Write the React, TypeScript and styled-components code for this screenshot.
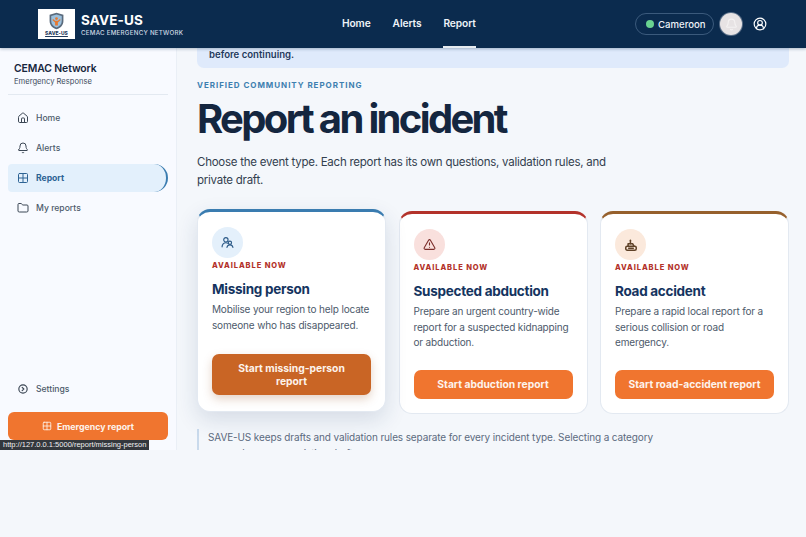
import React from 'react';
import styled, { createGlobalStyle } from 'styled-components';
import { Home, Bell, Folder, CircleUserRound, TriangleAlert, Grid2x2, CircleChevronRight } from 'lucide-react';

const GlobalStyle = createGlobalStyle`
	html, body {
		margin: 0;
		padding: 0;
		background: #f4f7fb;
		font-family: Inter, "Liberation Sans", sans-serif;
	}
	* {
		box-sizing: border-box;
	}
`;

const navLinks = ['Home', 'Alerts', 'Report'];

const sideItems = [
	{ label: 'Home', icon: <Home size={12} /> },
	{ label: 'Alerts', icon: <Bell size={12} /> },
	{ label: 'Report', icon: <Grid2x2 size={12} />, active: true },
	{ label: 'My reports', icon: <Folder size={12} /> },
];

const PeopleIcon = () => (
	<svg width="13" height="13" viewBox="0 0 24 24" fill="none" stroke="#2d5b88" strokeWidth="2.1" strokeLinecap="round" strokeLinejoin="round">
		<circle cx="9" cy="7" r="4" />
		<path d="M2 20c0-4.5 3-7.5 7-7.5 1.6 0 3 .4 4 1.2" />
		<circle cx="16.5" cy="12.5" r="3" />
		<path d="M11 21c.5-2.6 2.7-4.5 5.5-4.5s5 1.9 5.5 4.5" />
	</svg>
);

const RoadIcon = () => (
	<svg width="14" height="14" viewBox="0 0 24 24" fill="none" stroke="#5f4228" strokeWidth="2.6" strokeLinejoin="round" strokeLinecap="round">
		<rect x="3" y="14" width="18" height="7" rx="2.5" />
		<path d="M7 14v-4h8l2 4" />
		<path d="M11 10V4" />
		<path d="M8 17.5h8" />
	</svg>
);

const cards = [
	{
		title: 'Missing person',
		text: 'Mobilise your region to help locate someone who has disappeared.',
		button: 'Start missing-person report',
		accent: '#3a7cb0',
		tint: '#e4f0fb',
		icon: <PeopleIcon />,
		hovered: true,
	},
	{
		title: 'Suspected abduction',
		text: 'Prepare an urgent country-wide report for a suspected kidnapping or abduction.',
		button: 'Start abduction report',
		accent: '#b3322a',
		tint: '#f9e0dd',
		icon: <TriangleAlert size={13} color="#7c2d2a" />,
	},
	{
		title: 'Road accident',
		text: 'Prepare a rapid local report for a serious collision or road emergency.',
		button: 'Start road-accident report',
		accent: '#96602c',
		tint: '#fbe9dc',
		icon: <RoadIcon />,
	},
];

const App: React.FC = () => {
	return (
		<>
			<GlobalStyle />
			<Shell>
				<Header>
					<Brand>
						<LogoBox>
							<svg width="17" height="18" viewBox="0 0 24 26">
								<path d="M12 1l10 3v9c0 6-4 10-10 12C6 23 2 19 2 13V4z" fill="#5a6a7c" />
								<path d="M12 3.5l7.6 2.2V13c0 4.5-3 7.600-7.600 9.500C7.400 20.600 4.400 17.500 4.400 13V5.700z" fill="#9cc0dc" />
								<path d="M7 10l3 2.500h4l3-2.500 1 1.500-4 3.500v4.500h-4V15l-4-3.500z" fill="#e8792f" />
								<circle cx="12" cy="9.500" r="2" fill="#e8792f" />
							</svg>
							<LogoText>SAVE-US</LogoText>
						</LogoBox>
						<BrandText>
							<BrandName>SAVE-US</BrandName>
							<BrandSub>CEMAC EMERGENCY NETWORK</BrandSub>
						</BrandText>
					</Brand>
					<TopNav>
						{navLinks.map((link) => (
							<TopLink key={link} $active={link === 'Report'}>
								{link}
							</TopLink>
						))}
					</TopNav>
					<HeaderRight>
						<CountryPill>
							<Dot />
							Cameroon
						</CountryPill>
						<BellButton>
							<Bell size={13} color="#f4f2f2" />
						</BellButton>
						<UserButton>
							<CircleUserRound size={14} color="#ffffff" />
						</UserButton>
					</HeaderRight>
				</Header>
				<Body>
					<Sidebar>
						<SideHead>
							<SideTitle>CEMAC Network</SideTitle>
							<SideSub>Emergency Response</SideSub>
						</SideHead>
						<SideNav>
							{sideItems.map((item) => (
								<SideItem key={item.label} $active={item.active}>
									{item.icon}
									{item.label}
								</SideItem>
							))}
						</SideNav>
						<SideBottom>
							<SideItem>
								<SettingsIcon size={10} strokeWidth={2.8} />
								Settings
							</SideItem>
							<EmergencyButton>
								<Grid2x2 size={10} />
								Emergency report
							</EmergencyButton>
						</SideBottom>
					</Sidebar>
					<Main>
						<Banner>before continuing.</Banner>
						<Eyebrow>VERIFIED COMMUNITY REPORTING</Eyebrow>
						<Title>Report an incident</Title>
						<Lead>Choose the event type. Each report has its own questions, validation rules, and private draft.</Lead>
						<CardGrid>
							{cards.map((card) => (
								<Card key={card.title} $accent={card.accent} $hovered={card.hovered}>
									<IconCircle $tint={card.tint}>{card.icon}</IconCircle>
									<Available>AVAILABLE NOW</Available>
									<CardTitle>{card.title}</CardTitle>
									<CardText>{card.text}</CardText>
									<StartButton $hovered={card.hovered}>{card.button}</StartButton>
								</Card>
							))}
						</CardGrid>
						<Note>
							SAVE-US keeps drafts and validation rules separate for every incident type. Selecting a category never changes an existing draft.
						</Note>
					</Main>
					<StatusLink>http://127.0.0.1:5000/report/missing-person</StatusLink>
				</Body>
			</Shell>
		</>
	);
};

//스타일 컴포넌트
const Shell = styled.div`
	width: 806px;
	height: 537px;
	overflow: hidden;
	background: #f4f7fb;
`;

const Header = styled.header`
	position: relative;
	z-index: 2;
	height: 48px;
	display: flex;
	align-items: center;
	justify-content: space-between;
	padding: 0 38px;
	background: #0b2b4e;
	box-shadow: 0 1px 3px rgba(11, 43, 78, 0.3);
`;

const Brand = styled.div`
	display: flex;
	align-items: center;
	gap: 6px;
	width: 260px;
`;

const LogoBox = styled.div`
	width: 37px;
	height: 30px;
	display: flex;
	flex-direction: column;
	align-items: center;
	justify-content: center;
	background: #ffffff;
`;

const LogoText = styled.span`
	font-size: 5px;
	line-height: 6px;
	font-weight: 800;
	color: #1f3a5c;
	text-decoration: underline;
`;

const BrandText = styled.div`
	display: flex;
	flex-direction: column;
`;

const BrandName = styled.span`
	font-size: 13.5px;
	line-height: 16px;
	font-weight: 700;
	color: #ffffff;
	letter-spacing: 0.01em;
`;

const BrandSub = styled.span`
	font-size: 6.2px;
	line-height: 9px;
	font-weight: 500;
	color: #cfd9e4;
	letter-spacing: 0.04em;
`;

const TopNav = styled.nav`
	display: flex;
	gap: 22px;
	height: 48px;
	position: absolute;
	left: 342px;
`;

const TopLink = styled.a<{ $active?: boolean }>`
	display: flex;
	align-items: center;
	height: 48px;
	font-size: 10.2px;
	font-weight: 600;
	letter-spacing: -0.1px;
	color: #eef3f8;
	border-bottom: 2px solid ${(p) => (p.$active ? '#e6ebf0' : 'transparent')};
`;

const HeaderRight = styled.div`
	display: flex;
	align-items: center;
	margin-right: -1px;
	position: absolute;
	left: 635px;
`;

const CountryPill = styled.div`
	display: flex;
	align-items: center;
	gap: 4px;
	width: 79px;
	height: 22px;
	padding-left: 10px;
	border: 1px solid #3b5a7c;
	border-radius: 11px;
	font-size: 9.6px;
	font-weight: 500;
	color: #eef3f8;
`;

const Dot = styled.span`
	width: 8px;
	height: 8px;
	border-radius: 50%;
	background: #69d391;
`;

const BellButton = styled.div`
	width: 22px;
	height: 22px;
	margin-left: 6px;
	display: flex;
	align-items: center;
	justify-content: center;
	border-radius: 50%;
	background: #e7e3e4;
	box-shadow: 0 0 0 1px #5a6f88;
`;

const UserButton = styled.div`
	margin-left: 11px;
	display: flex;
`;

const Body = styled.div`
	position: relative;
	display: flex;
	height: 402px;
`;

const Sidebar = styled.aside`
	width: 177px;
	flex-shrink: 0;
	display: flex;
	flex-direction: column;
	background: #f8faff;
	border-right: 1px solid #eaeff6;
	padding: 0 8px 10px;
`;

const SideHead = styled.div`
	padding: 14px 6px 6px;
	border-bottom: 1px solid #e3e9f1;
`;

const SideTitle = styled.div`
	font-size: 10.4px;
	line-height: 13px;
	font-weight: 600;
	letter-spacing: -0.01em;
	color: #16263d;
`;

const SideSub = styled.div`
	font-size: 7.6px;
	line-height: 13px;
	color: #3e4c5e;
`;

const SideNav = styled.nav`
	display: flex;
	flex-direction: column;
	gap: 2.3px;
	margin-top: 8.5px;
`;

const SideItem = styled.a<{ $active?: boolean }>`
	display: flex;
	align-items: center;
	gap: 7px;
	height: 28px;
	padding-left: 9px;
	font-size: 8.6px;
	font-weight: ${(p) => (p.$active ? 700 : 500)};
	color: ${(p) => (p.$active ? '#2d6394' : '#4d5a6b')};
	background: ${(p) => (p.$active ? '#e3f0fc' : 'transparent')};
	border-radius: ${(p) => (p.$active ? '4px 14px 14px 4px' : '0')};
	border-right: ${(p) => (p.$active ? '2px solid #3a7cb0' : '0')};
	svg {
		color: ${(p) => (p.$active ? '#2d6394' : '#3b4654')};
		flex-shrink: 0;
	}
`;

const SettingsIcon = styled(CircleChevronRight)`
	margin: 0 1px;
`;

const SideBottom = styled.div`
	margin-top: auto;
	display: flex;
	flex-direction: column;
	gap: 9px;
`;

const EmergencyButton = styled.button`
	height: 28px;
	display: flex;
	align-items: center;
	justify-content: center;
	gap: 5px;
	border: 0;
	border-radius: 6px;
	background: #f0752f;
	color: #fdf3ec;
	font-family: inherit;
	font-size: 8.8px;
	font-weight: 700;
`;

const Main = styled.main`
	flex: 1;
	min-width: 0;
	overflow: hidden;
	padding: 0 17px 0 20px;
`;

const Banner = styled.div`
	height: 20px;
	padding: 0 12px;
	border-radius: 0 0 7px 7px;
	background: #dfeafb;
	font-size: 9.6px;
	line-height: 13px;
	font-weight: 600;
	color: #1f3a5c;
`;

const Eyebrow = styled.div`
	margin-top: 12px;
	font-size: 8px;
	line-height: 10px;
	font-weight: 700;
	letter-spacing: 0.12em;
	color: #3d7fb0;
`;

const Title = styled.h1`
	margin: 4px 0 0;
	font-size: 40px;
	line-height: 50px;
	font-weight: 700;
	letter-spacing: -2.67px;
	color: #14263f;
`;

const Lead = styled.p`
	margin: 9px 0 0;
	max-width: 415px;
	font-size: 11.5px;
	line-height: 18px;
	letter-spacing: -0.25px;
	color: #33404f;
`;

const CardGrid = styled.div`
	display: grid;
	grid-template-columns: repeat(3, 1fr);
	gap: 12.5px;
	margin-top: 22px;
`;

const Card = styled.article<{ $accent: string; $hovered?: boolean }>`
	display: flex;
	flex-direction: column;
	height: 203px;
	padding: 15px 14px 14px;
	background: #ffffff;
	border: 1px solid #e3e9f1;
	border-top: 3.5px solid ${(p) => p.$accent};
	border-radius: 13px;
	transform: ${(p) => (p.$hovered ? 'translateY(-2px)' : 'none')};
	box-shadow: ${(p) => (p.$hovered ? '0 8px 22px rgba(30, 60, 100, 0.14)' : 'none')};
`;

const IconCircle = styled.div<{ $tint: string }>`
	width: 31px;
	height: 31px;
	flex-shrink: 0;
	display: flex;
	align-items: center;
	justify-content: center;
	border-radius: 50%;
	background: ${(p) => p.$tint};
`;

const Available = styled.div`
	margin-top: 3px;
	font-size: 7.5px;
	line-height: 10px;
	font-weight: 800;
	letter-spacing: 0.12em;
	color: #b3322a;
`;

const CardTitle = styled.h2`
	margin: 9px 0 0;
	font-size: 13.5px;
	line-height: 18px;
	font-weight: 700;
	letter-spacing: -0.02em;
	color: #143460;
`;

const CardText = styled.p`
	margin: 4px 0 0;
	font-size: 10px;
	line-height: 15.5px;
	letter-spacing: -0.16px;
	color: #4d5a6b;
`;

const StartButton = styled.button<{ $hovered?: boolean }>`
	margin-top: auto;
	min-height: 29px;
	padding: ${(p) => (p.$hovered ? '8px 22px' : '0 8px')};
	border: 0;
	border-radius: 7px;
	background: ${(p) => (p.$hovered ? '#c96525' : '#f0752f')};
	box-shadow: ${(p) => (p.$hovered ? '0 4px 10px rgba(150, 80, 30, 0.25)' : 'none')};
	transform: ${(p) => (p.$hovered ? 'translateY(-2px)' : 'none')};
	color: #fdf3ec;
	font-family: inherit;
	font-size: 10.3px;
	line-height: 12.5px;
	font-weight: 700;
`;

const Note = styled.p`
	margin: 15px 0 0;
	padding-left: 9px;
	max-width: 470px;
	border-left: 2px solid #c9daec;
	font-size: 10px;
	line-height: 16px;
	letter-spacing: -0.12px;
	color: #5c6b80;
`;

const StatusLink = styled.div`
	position: absolute;
	left: 0;
	bottom: 0;
	height: 10px;
	padding: 0 3px;
	background: #33373c;
	color: #f0f0f0;
	font-family: "Liberation Sans", sans-serif;
	font-size: 7.5px;
	line-height: 10px;
`;

export default App;
